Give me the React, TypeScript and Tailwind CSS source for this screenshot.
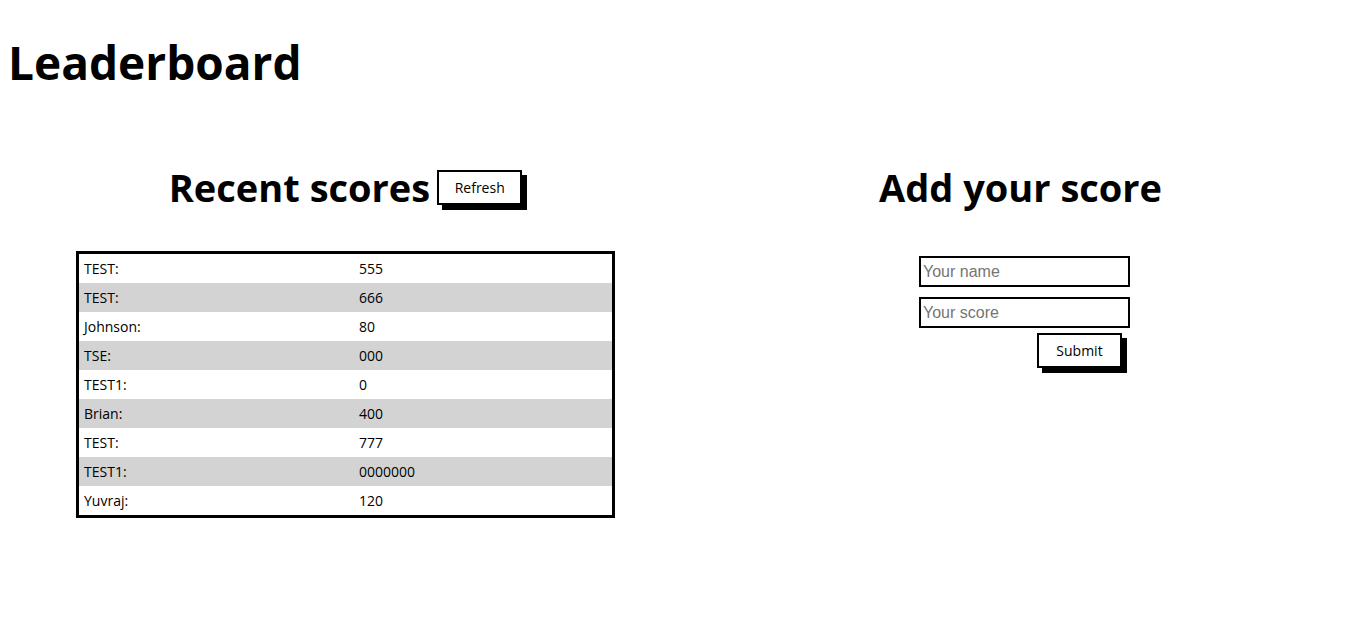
const scores: [string, string][] = [
  ["TEST", "555"],
  ["TEST", "666"],
  ["Johnson", "80"],
  ["TSE", "000"],
  ["TEST1", "0"],
  ["Brian", "400"],
  ["TEST", "777"],
  ["TEST1", "0000000"],
  ["Yuvraj", "120"],
];

function ShadowButton({ label }: { label: string }) {
  return (
    <button className="h-[35px] w-[85px] border-2 border-black bg-white text-[14px] text-black shadow-[5px_5px_0_0_#000]">
      {label}
    </button>
  );
}

export default function App() {
  return (
    <div className="min-h-screen bg-white p-2 font-['Open_Sans','Lato',sans-serif] text-black">
      <h1 className="mt-[24px] text-[46px] font-bold leading-[60px]">Leaderboard</h1>

      <div className="mt-[70px] flex">
        <section className="flex w-1/2 flex-col items-center">
          <div className="flex items-center gap-[7px]">
            <h2 className="text-[38px] font-bold leading-[50px]">Recent scores</h2>
            <ShadowButton label="Refresh" />
          </div>
          <div className="mt-[39px] w-[539px] border-[3px] border-black text-[14px]">
            {scores.map(([name, score], i) => (
              <div
                key={i}
                className={`flex h-[29px] items-center px-[5px] ${i % 2 === 1 ? "bg-[#d3d3d3]" : "bg-white"}`}
              >
                <span className="w-[275px]">{name}:</span>
                <span>{score}</span>
              </div>
            ))}
          </div>
        </section>

        <section className="flex w-1/2 flex-col items-center">
          <h2 className="text-[38px] font-bold leading-[50px]">Add your score</h2>
          <form className="ml-2 mt-[44px] flex w-[211px] flex-col items-end">
            <input
              placeholder="Your name"
              className="h-[31px] w-full border-2 border-black px-[2px] font-['Liberation_Sans',sans-serif] text-[16px] outline-none placeholder:text-[#757575]"
            />
            <input
              placeholder="Your score"
              className="mt-[10px] h-[31px] w-full border-2 border-black px-[2px] font-['Liberation_Sans',sans-serif] text-[16px] outline-none placeholder:text-[#757575]"
            />
            <div className="mr-2 mt-[5px]">
              <ShadowButton label="Submit" />
            </div>
          </form>
        </section>
      </div>
    </div>
  );
}
